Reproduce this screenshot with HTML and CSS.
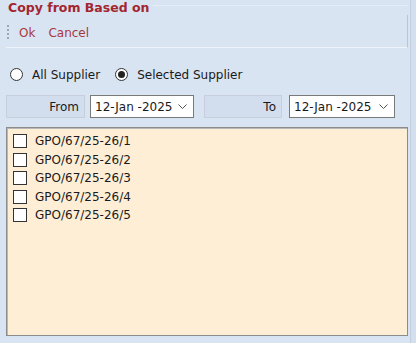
FILE: index.html
```html
<!DOCTYPE html>
<html lang="en">
<head>
    <meta charset="UTF-8">
    <meta name="viewport" content="width=device-width, initial-scale=1.0">
    <title>Copy from Based on</title>
    <link rel="stylesheet" href="styles.css">
</head>
<body>
    <div class="window">
        <div class="main">
            <div class="caption">
                <span class="caption-text">Copy from Based on</span>
                <span class="caption-line"></span>
            </div>

            <div class="toolbar">
                <span class="grip"></span>
                <button class="tool-button">Ok</button>
                <button class="tool-button">Cancel</button>
            </div>

            <div class="radio-row">
                <label class="radio-item"><span class="radio"></span>All Supplier</label>
                <label class="radio-item"><span class="radio checked"></span>Selected Supplier</label>
            </div>

            <div class="date-row">
                <div class="label-box">From</div>
                <div class="date-box">
                    <span>12-Jan -2025</span>
                    <svg class="chevron" width="9" height="5" viewBox="0 0 9 5"><polyline points="0.5,0.5 4.5,4.5 8.5,0.5" fill="none" stroke="#555" stroke-width="1"/></svg>
                </div>
                <div class="label-box to">To</div>
                <div class="date-box wide">
                    <span>12-Jan -2025</span>
                    <svg class="chevron" width="9" height="5" viewBox="0 0 9 5"><polyline points="0.5,0.5 4.5,4.5 8.5,0.5" fill="none" stroke="#555" stroke-width="1"/></svg>
                </div>
            </div>

            <div class="list-box">
                <label class="list-item"><span class="checkbox"></span>GPO/67/25-26/1</label>
                <label class="list-item"><span class="checkbox"></span>GPO/67/25-26/2</label>
                <label class="list-item"><span class="checkbox"></span>GPO/67/25-26/3</label>
                <label class="list-item"><span class="checkbox"></span>GPO/67/25-26/4</label>
                <label class="list-item"><span class="checkbox"></span>GPO/67/25-26/5</label>
            </div>
        </div>
        <div class="side-strip"></div>
    </div>
</body>
</html>
```

FILE: styles.css
```css
body {
    margin: 0;
    background: #d8e4f2;
    font-family: "DejaVu Sans", Tahoma, sans-serif;
    font-size: 12px;
    color: #1a1a1a;
}

.window {
    display: flex;
    height: 343px;
}

.main {
    width: 402px;
    padding-left: 6px;
}

.side-strip {
    flex: 1;
    margin-left: 2px;
    border-left: 1px solid #c3cfdd;
    background: #d3dfee;
}

.caption {
    display: flex;
    height: 15px;
    padding-left: 2px;
}

.caption-text {
    font-weight: bold;
    font-size: 12.5px;
    line-height: 18px;
    margin-top: -1px;
    color: #a3262f;
}

.caption-line {
    flex: 1;
    margin: 5px 0 0 4px;
    border-top: 1px solid #e6edf6;
    height: 0;
}

.toolbar {
    display: flex;
    align-items: center;
    height: 33px;
    padding-top: 3px;
    box-sizing: border-box;
    border-bottom: 1px solid #eef3f9;
    border-right: 1px solid #b9c5d3;
}

.grip {
    width: 2px;
    height: 16px;
    margin: 0 10px 0 1px;
    background: repeating-linear-gradient(to bottom, #9aa6b5 0 2px, transparent 2px 4px);
}

.tool-button {
    background: none;
    border: none;
    padding: 0;
    margin-right: 13px;
    font-family: inherit;
    font-size: 12px;
    color: #a8383d;
    cursor: pointer;
}

.radio-row {
    display: flex;
    align-items: center;
    height: 17px;
    margin-top: 18px;
}

.radio-item {
    display: flex;
    align-items: center;
    margin-left: 4px;
    margin-right: 11px;
}

.radio {
    width: 11px;
    height: 11px;
    border: 1px solid #333;
    border-radius: 50%;
    background: #fff;
    margin-right: 9px;
    position: relative;
}

.radio.checked::after {
    content: "";
    position: absolute;
    left: 2px;
    top: 2px;
    width: 7px;
    height: 7px;
    border-radius: 50%;
    background: #222;
}

.date-row {
    display: flex;
    margin-top: 12px;
    height: 23px;
}

.label-box {
    width: 72px;
    padding-right: 5px;
    text-align: right;
    line-height: 23px;
    border: 1px solid #c6cfdb;
    background: #d2deed;
}

.label-box.to {
    width: 71px;
    margin-left: 10px;
}

.date-box {
    display: flex;
    align-items: center;
    justify-content: space-between;
    width: 92px;
    margin-left: 5px;
    padding: 0 6px 0 4px;
    border: 1px solid #7a7a7a;
    background: #fff;
}

.date-box.wide {
    width: 94px;
    margin-left: 7px;
}

.list-box {
    margin-top: 9px;
    height: 203px;
    padding: 4px 0 0 6px;
    border: 1px solid #8c8c8c;
    box-shadow: inset 1px 1px 0 #b8b8b8;
    background: #ffeed6;
}

.list-item {
    display: flex;
    align-items: center;
    height: 18.5px;
}

.checkbox {
    width: 12px;
    height: 12px;
    border: 1px solid #333;
    background: #fff;
    margin-right: 8px;
}
```
